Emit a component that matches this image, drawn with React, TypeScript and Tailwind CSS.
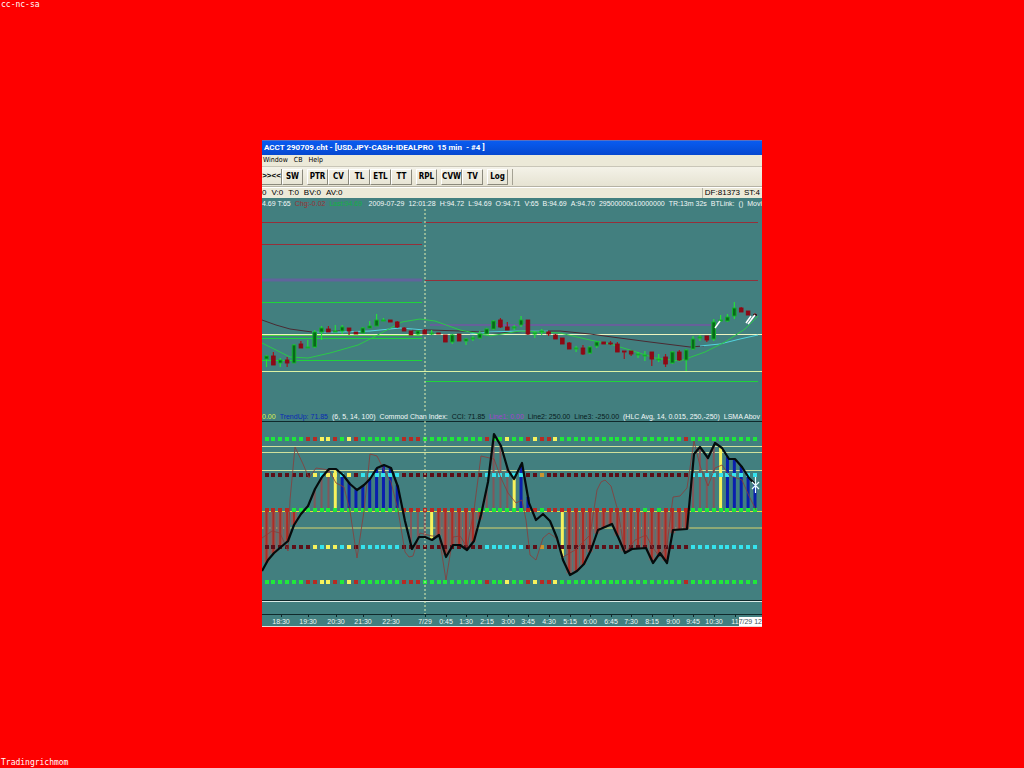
import { clsx } from 'clsx';

const STEP = 6.88;
const START = 266.5;
const barX = (i: number) => START + i * STEP;

// index, high, body top, body bottom, low, direction
type Candle = [number, number, number, number, number, 'u' | 'd'];

const candles: Candle[] = [
  [0, 355, 356, 359, 367, 'u'], [1, 352, 356, 365, 365, 'd'], [2, 358, 360, 363, 367, 'u'],
  [3, 357, 360, 363, 367, 'd'], [4, 344, 345, 363, 363, 'u'], [5, 341, 344, 348, 348, 'd'],
  [6, 340, 347, 348, 348, 'u'], [7, 330, 332, 347, 348, 'u'], [8, 326, 328, 332, 340, 'u'],
  [9, 326, 329, 332, 332, 'd'], [10, 325, 331, 332, 332, 'u'], [11, 325, 327, 331, 334, 'u'],
  [12, 328, 328, 331, 335, 'd'], [13, 332, 332, 334, 334, 'd'], [14, 327, 328, 333, 333, 'u'],
  [15, 321, 326, 328, 328, 'u'], [16, 314, 320, 326, 326, 'u'], [17, 318, 320, 321, 321, 'u'],
  [18, 320, 320, 322, 322, 'd'], [19, 321, 322, 327, 328, 'd'], [20, 327, 328, 331, 331, 'd'],
  [21, 331, 331, 335, 335, 'd'], [22, 331, 331, 334, 335, 'u'], [23, 329, 330, 334, 334, 'd'],
  [24, 330, 333, 334, 335, 'u'], [25, 333, 333, 334, 334, 'd'], [26, 335, 335, 342, 342, 'd'],
  [27, 334, 335, 342, 344, 'u'], [28, 334, 334, 341, 341, 'd'], [29, 338, 339, 341, 345, 'u'],
  [30, 336, 338, 339, 341, 'u'], [31, 331, 334, 338, 339, 'u'], [32, 328, 329, 334, 334, 'u'],
  [33, 320, 321, 329, 330, 'u'], [34, 318, 320, 327, 328, 'd'], [35, 322, 327, 330, 330, 'd'],
  [36, 325, 327, 328, 330, 'u'], [37, 316, 320, 325, 327, 'u'], [38, 320, 320, 334, 335, 'd'],
  [39, 331, 333, 334, 338, 'u'], [40, 329, 331, 332, 335, 'u'], [41, 331, 332, 334, 336, 'd'],
  [42, 334, 335, 339, 339, 'd'], [43, 338, 338, 344, 344, 'd'], [44, 342, 343, 349, 349, 'd'],
  [45, 346, 348, 349, 352, 'u'], [46, 345, 348, 354, 355, 'd'], [47, 346, 347, 353, 354, 'u'],
  [48, 341, 342, 346, 348, 'u'], [49, 342, 342, 344, 344, 'd'], [50, 341, 343, 344, 345, 'd'],
  [51, 342, 344, 352, 352, 'd'], [52, 351, 351, 352, 359, 'd'], [53, 351, 351, 354, 356, 'd'],
  [54, 352, 354, 355, 358, 'u'], [55, 351, 355, 356, 361, 'u'], [56, 352, 352, 359, 366, 'd'],
  [57, 354, 359, 360, 362, 'u'], [58, 354, 357, 364, 367, 'd'], [59, 351, 352, 363, 364, 'u'],
  [60, 350, 352, 360, 361, 'd'], [61, 349, 350, 360, 371, 'u'], [62, 336, 339, 349, 350, 'u'],
  [63, 335, 337, 338, 341, 'u'], [64, 336, 336, 340, 342, 'd'], [65, 319, 322, 339, 341, 'u'],
  [66, 315, 320, 321, 322, 'u'], [67, 314, 317, 321, 322, 'u'], [68, 302, 308, 316, 319, 'u'],
  [69, 307, 308, 312, 312, 'd'], [70, 311, 311, 315, 315, 'd'], [71, 313, 314, 316, 316, 'd'],
];

// one letter per bar
const outerDots = 'gggggg' + 'rryyrgyr' + 'gggggg' + 'rrr' + 'ggggggggg' + 'rggyggryrry' + 'g'.repeat(18) + 'r' + 'g'.repeat(10);
const innerDots = 'd'.repeat(7) + 'ycyycyd' + 'c'.repeat(6) + 'd'.repeat(12) + 'c'.repeat(6) + 'ddo' + 'd'.repeat(21) + 'c'.repeat(10);
const zeroDots = 'rrrr' + 'g'.repeat(16) + 'r'.repeat(11) + 'g'.repeat(7) + 'rrg' + 'r'.repeat(14) + 'grg' + 'rrrr' + 'g'.repeat(10);
const histogram = 'rrrrr..ppp' + 'ybbbbbbbbb' + 'pppp' + 'y' + 'rrrrrrr' + 'pppp' + 'ybb' + '....' + 'yrrrr' + 'r'.repeat(14) + 'pppp' + 'ybbbbb';

const palette: Record<string, string> = {
  g: '#1fe83a',
  r: '#b82a22',
  y: '#f7f25c',
  c: '#35e3ee',
  d: '#5c0f18',
  o: '#c9952f',
  b: '#0a1fae',
  p: '#82575a',
};

const cci: [number, number][] = [
  [262, 571], [268, 560], [274, 553], [281, 547], [288, 541], [294, 525], [301, 514], [308, 506],
  [315, 489], [322, 477], [329, 469], [336, 469], [343, 475], [350, 484], [357, 490], [364, 485],
  [370, 479], [377, 468], [384, 465], [391, 468], [398, 487], [405, 521], [412, 549], [419, 537],
  [425, 537], [432, 540], [439, 535], [446, 557], [453, 545], [460, 545], [467, 550], [474, 541],
  [481, 515], [488, 482], [494, 434], [501, 446], [508, 470], [514, 479], [522, 463], [529, 503],
  [536, 520], [543, 514], [550, 521], [557, 538], [563, 560], [570, 575], [577, 571], [584, 564],
  [591, 550], [598, 530], [605, 527], [612, 524], [619, 539], [625, 553], [632, 549], [646, 548],
  [653, 563], [660, 553], [667, 563], [673, 530], [687, 529], [694, 454], [700, 447], [708, 458],
  [715, 443], [722, 448], [729, 459], [735, 459], [742, 467], [749, 478], [756, 485],
];

const turbo: [number, number][] = [
  [262, 538], [272, 531], [280, 533], [288, 551], [290, 500], [295, 447], [303, 464], [309, 478],
  [316, 468], [329, 470], [336, 483], [344, 487], [350, 511], [357, 558], [364, 511], [370, 454],
  [377, 456], [384, 470], [391, 482], [398, 510], [405, 552], [409, 557], [413, 556], [420, 533],
  [432, 536], [439, 536], [446, 580], [453, 537], [460, 536], [467, 547], [474, 510], [481, 456],
  [494, 459], [501, 478], [508, 493], [516, 503], [522, 500], [526, 520], [530, 555], [536, 560],
  [543, 538], [549, 533], [556, 538], [563, 557], [575, 550], [590, 535], [597, 490], [601, 482],
  [605, 480], [611, 486], [618, 511], [625, 553], [635, 540], [646, 535], [653, 548], [660, 557],
  [667, 545], [673, 497], [680, 496], [687, 488], [694, 441], [700, 466], [708, 486], [715, 468],
  [722, 465], [729, 475], [742, 480], [749, 496], [756, 510],
];

const toPoints = (pts: [number, number][]) => pts.map((p) => p.join(',')).join(' ');

// y of the thick line above or below a given x
const cciAt = (x: number) => {
  const n = cci.findIndex((p) => p[0] >= x);
  if (n <= 0) return cci[Math.max(n, 0)][1];
  const [x0, y0] = cci[n - 1];
  const [x1, y1] = cci[n];
  return y0 + ((y1 - y0) * (x - x0)) / (x1 - x0);
};

const times: [number, string][] = [
  [281, '18:30'], [308, '19:30'], [336, '20:30'], [363, '21:30'], [391, '22:30'], [425, '7/29'],
  [446, '0:45'], [466, '1:30'], [487, '2:15'], [508, '3:00'], [528, '3:45'], [549, '4:30'],
  [570, '5:15'], [590, '6:00'], [611, '6:45'], [631, '7:30'], [652, '8:15'], [673, '9:00'],
  [693, '9:45'], [714, '10:30'], [735, '11'],
];

const quote = [
  '2009-07-29', '12:01:28', 'H:94.72', 'L:94.69', 'O:94.71', 'V:65', 'B:94.69', 'A:94.70',
  '29500000x10000000', 'TR:13m 32s', 'BTLink:', '()', 'Movi',
];

const toolGroups = [['PTR', 'CV', 'TL', 'ETL', 'TT'], ['RPL'], ['CVW', 'TV'], ['Log']];

function ToolButton({ label, first }: { label: string; first?: boolean }) {
  return (
    <button
      type="button"
      className={clsx(
        'h-4 border-r border-b border-[#8b897c] text-center text-[8px] leading-[14px] font-bold text-black',
        first
          ? 'w-[20px]'
          : "w-[21px] border-t border-l border-t-white border-l-white font-['DejaVu_Sans_Condensed','DejaVu_Sans',sans-serif]"
      )}
    >
      {label}
    </button>
  );
}

function DotRow({ y, colors }: { y: number; colors: string }) {
  return (
    <g shapeRendering="crispEdges">
      {colors.split('').map((c, i) => (
        <rect key={i} x={barX(i) - 2} y={y - 2} width="4" height="4" fill={palette[c]} />
      ))}
    </g>
  );
}

function PriceChart() {
  return (
    <svg viewBox="262 209 500 202" className="block w-full" role="img" aria-label="USD.JPY price">
      <g strokeWidth="1" fill="none">
        <path d="M262 222.500H422M262 244.500H422M425 222.500H758M425 280.500H758" stroke="#94303a" />
        <path d="M262 280H422" stroke="#61649c" strokeWidth="3" />
        <path d="M430 325H715" stroke="#66609a" strokeWidth="2" />
        <path d="M262 302.500H422M262 338.500H422M262 360.500H422M425 381.500H758" stroke="#1fd43a" />
        <path d="M262 335.500H422" stroke="#49d23f" />
        <path d="M262 334.500H762" stroke="#eef5c0" />
        <path d="M262 371.500H762" stroke="#dcf3a4" />
        <path d="M262 320L276 325L290 329L312 332L340 331M412 330L430 330L460 331L500 333L530 331L560 331L590 334L612 337L650 342L690 347L704 346" stroke="#4a2a32" />
        <path d="M312 332L340 332L370 331L400 328L425 330M470 334L490 332L520 331L548 331M700 346L720 344L740 339L758 335" stroke="#52d5e0" />
        <path
          d="M262 343L276 350L290 357L308 358L330 353L358 345L372 338L385 331L402 322L420 319L435 321L460 330L490 336L520 331L560 333L590 340L610 344L630 350L655 358L680 361L705 352L725 342L745 329L758 316"
          stroke="#2bc948"
        />
        <path d="M425 209V411" stroke="#e3f0b0" strokeDasharray="2 2" />
      </g>
      {candles.map(([i, high, top, bottom, low, dir]) => {
        const up = dir === 'u';
        const x = barX(i);
        return (
          <g key={i}>
            <path d={`M${x} ${high}V${low}`} stroke={up ? '#25e03a' : '#a3121d'} strokeWidth="1.2" />
            <rect
              x={x - 1.8}
              y={top}
              width="3.6"
              height={bottom - top}
              fill={i === 71 ? '#3b0d14' : up ? '#08691a' : '#8d0915'}
              stroke={i === 71 ? 'none' : up ? '#13b52a' : '#8d0915'}
              strokeWidth="0.9"
            />
          </g>
        );
      })}
      <path d="M715 328L720 321M746 323L751 316M748 324L755 315M751 320L754 316" stroke="#fff" strokeWidth="1.5" />
    </svg>
  );
}

function IndicatorChart() {
  return (
    <svg
      viewBox="262 421 500 206"
      className="block w-full font-['Liberation_Sans',Arial,sans-serif] text-[7px]"
      role="img"
      aria-label="Commod Chan Index"
    >
      <path d="M262 421.500H762M262 600.500H762M262 614.500H762" stroke="#10292b" />
      <path d="M262 601.500H762" stroke="#d9ebe6" />
      <path d="M262 446.500H762M262 452.500H762M262 470.500H762" stroke="#d0e09c" />
      <path d="M262 528H762" stroke="#a9b872" strokeWidth="1.4" />

      {histogram.split('').map((c, i) => {
        if (c === '.') return null;
        const x = barX(i);
        const wide = c === 'y' || c === 'b';
        return (
          <g key={i}>
            {c === 'r' && <path d={`M${x} 511V${cciAt(x)}`} stroke="#7f6361" strokeWidth="6" />}
            <path
              d={`M${x} 511V${cciAt(x)}`}
              stroke={c === 'r' ? '#b02c24' : palette[c]}
              strokeWidth={wide ? 3 : 2}
            />
          </g>
        );
      })}

      <path d="M262 511.500H762" stroke="#dde03f" />
      <DotRow y={439} colors={outerDots} />
      <DotRow y={475} colors={innerDots} />
      <DotRow y={510} colors={zeroDots} />
      <DotRow y={547} colors={innerDots} />
      <DotRow y={582} colors={outerDots} />
      <path d="M425 421V614" stroke="#e3f0b0" strokeDasharray="2 2" />

      <polyline points={toPoints(turbo)} fill="none" stroke="#8c3b39" strokeWidth="0.8" />
      <polyline points={toPoints(cci)} fill="none" stroke="#050b0c" strokeWidth="2.2" strokeLinejoin="round" />

      {/* cross cursor on the last bar */}
      <path d="M755.500 477V493M752 482L759 489M759 482L752 489" stroke="#e8fbff" strokeWidth="1.2" fill="none" />

      {times.map(([x, label]) => (
        <g key={label}>
          <path d={`M${x}.5 614V617`} stroke="#10292b" />
          <text x={x} y="624" textAnchor="middle" fill="#eef6f4">
            {label}
          </text>
        </g>
      ))}
      <rect x="739" y="617" width="23" height="9" fill="#fff" />
      <text x="762" y="624" textAnchor="end" fill="#44545c">
        7/29 12
      </text>
      <path d="M262 626.500H762" stroke="#ecd9d6" />
    </svg>
  );
}

export default function App() {
  return (
    <div className="flex min-h-screen flex-col items-center justify-between bg-[#fe0000] font-['Liberation_Sans',Arial,sans-serif]">
      <p className="w-full px-px font-['DejaVu_Sans_Mono',monospace] text-[8px] leading-[9px] text-white">cc-nc-sa</p>

      <main className="w-full max-w-[500px] overflow-hidden bg-[#427f7f] whitespace-nowrap">
        <h1 className="h-[15px] border-t border-[#5a6fc0] bg-linear-to-b from-[#0a5cf0] to-[#0648d0] pl-0.5 font-[Roboto,sans-serif] text-[8px] leading-[14px] font-bold whitespace-pre text-white">
          ACCT 290709.cht - [USD.JPY-CASH-IDEALPRO  15 min  - #4 ]
        </h1>

        <nav className="flex h-[12px] gap-1.5 border-b border-[#c9c6b8] bg-[#ece9d8] pl-px font-['DejaVu_Sans_Condensed','DejaVu_Sans',sans-serif] text-[7px] leading-[11px] text-black">
          <button type="button">Window</button>
          <button type="button">CB</button>
          <button type="button">Help</button>
        </nav>

        <div className="flex h-5 items-center gap-1 border-b border-[#b5b2a4] bg-linear-to-b from-[#f4f2e8] to-[#e6e3d2]">
          <div className="flex">
            <ToolButton label=">><<" first />
            <ToolButton label="SW" />
          </div>
          {toolGroups.map((group) => (
            <div key={group[0]} className="flex">
              {group.map((label) => (
                <ToolButton key={label} label={label} />
              ))}
            </div>
          ))}
          <span className="h-4 w-px bg-[#a5a294]" />
        </div>

        <div className="flex h-[11px] items-center justify-between border-t border-white bg-[#ece9d8] text-[8px] leading-[10px] text-black">
          <div className="flex gap-[5px]">
            <span>0</span>
            <span>V:0</span>
            <span>T:0</span>
            <span>BV:0</span>
            <span>AV:0</span>
          </div>
          <div className="flex gap-1 border-l border-[#b5b2a4] px-0.5">
            <span>DF:81373</span>
            <span>ST:4</span>
          </div>
        </div>

        <div className="flex h-[11px] gap-1 text-[7px] leading-[11px] text-[#f2f8f7]">
          <span>4.69 T:65</span>
          <span className="text-[#9c3034]">Chg:-0.02</span>
          <span className="w-9 text-[#12b043]">Last:94.69</span>
          {quote.map((part) => (
            <span key={part}>{part}</span>
          ))}
        </div>

        <PriceChart />

        <div className="flex h-[10px] gap-1 text-[7px] leading-[11px] text-[#f2f8f7]">
          <span className="text-[#dcee50]">0.00</span>
          <span className="text-[#0a2ab4]">TrendUp: 71.85</span>
          <span>(6, 5, 14, 100)</span>
          <span>Commod Chan Index:</span>
          <span className="text-[#071a1c]">CCI: 71.85</span>
          <span className="text-[#a23fd0]">Line1: 0.00</span>
          <span className="text-[#071a1c]">Line2: 250.00</span>
          <span className="text-[#071a1c]">Line3: -250.00</span>
          <span>(HLC Avg, 14, 0.015, 250,-250)</span>
          <span>LSMA Abov</span>
        </div>

        <IndicatorChart />
      </main>

      <p className="w-full px-px font-['DejaVu_Sans_Mono',monospace] text-[8px] leading-[10px] text-white">Tradingrichmom</p>
    </div>
  );
}
